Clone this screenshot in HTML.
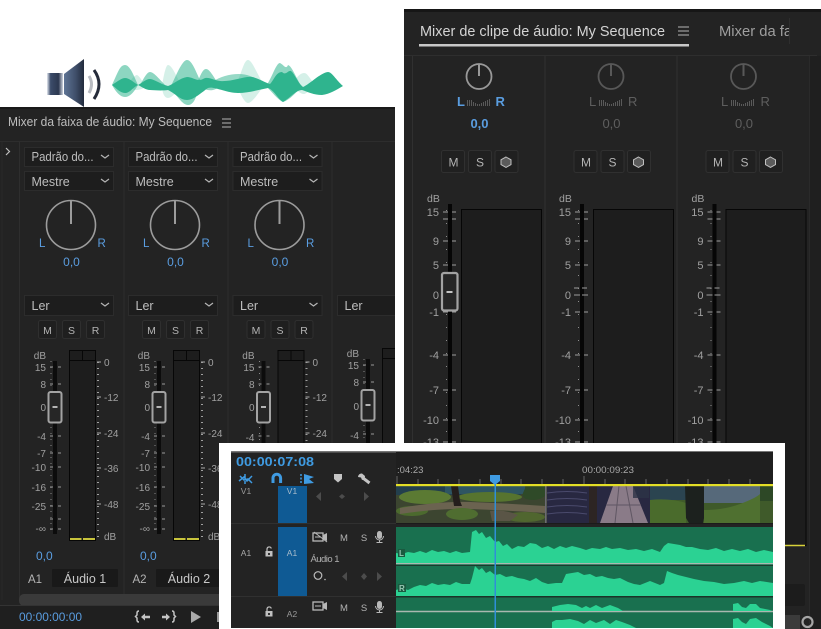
<!DOCTYPE html>
<html><head><meta charset="utf-8"><style>
html,body{margin:0;padding:0;background:#fff;width:821px;height:629px;overflow:hidden}
svg{display:block}
text{font-family:"Liberation Sans",sans-serif;fill:#b4b4b4}
.b{fill:#5a9de0}
.s{font-size:10px;fill:#a0a0a0}
.d{font-size:12.5px;fill:#bdbdbd}
.r{text-anchor:end}
.m{text-anchor:middle}
.g{fill:#5e5e5e}
</style></head><body>
<svg width="821" height="629" viewBox="0 0 821 629" xmlns="http://www.w3.org/2000/svg">
<defs>
<linearGradient id="cone" x1="0" x2="1" y1="0" y2="0"><stop offset="0" stop-color="#5f7596"/><stop offset=".6" stop-color="#3e4d68"/><stop offset="1" stop-color="#222b3c"/></linearGradient>
<linearGradient id="bx" x1="0" x2="1" y1="0" y2="0"><stop offset="0" stop-color="#e4e8f0"/><stop offset=".22" stop-color="#3c4c6a"/><stop offset=".72" stop-color="#2c3850"/><stop offset="1" stop-color="#cfd5e0"/></linearGradient>
<clipPath id="lp"><rect x="0" y="107" width="395" height="522"/></clipPath>
<clipPath id="rp"><rect x="404" y="9" width="417" height="620"/></clipPath>
<clipPath id="tl"><rect x="396" y="452" width="377" height="176"/></clipPath>
<path id="chev" d="M0 0l4 3 4-3" fill="none" stroke="#b5b5b5" stroke-width="1.2"/>

<g id="lTop">
<rect x="24.500" y="147.500" width="89" height="19" fill="#1d1d1d" stroke="#2c2c2c"/>
<rect x="24.500" y="171.500" width="89" height="19" fill="#1d1d1d" stroke="#2c2c2c"/>
<use href="#chev" x="101" y="155"/><use href="#chev" x="101" y="179"/>
<circle cx="71" cy="225" r="24.500" fill="none" stroke="#9c9c9c" stroke-width="1.600"/>
<path d="M71 201V224" stroke="#9c9c9c" stroke-width="2"/>
</g>
<g id="lLer">
<rect x="24.500" y="295.500" width="89" height="20" fill="#1d1d1d" stroke="#2c2c2c"/>
<use href="#chev" x="101" y="303"/>
</g>
<g id="lBtn">
<rect x="38.500" y="320.500" width="18" height="18" rx="2" fill="#1f1f1f" stroke="#2f2f2f"/>
<rect x="62.500" y="320.500" width="18" height="18" rx="2" fill="#1f1f1f" stroke="#2f2f2f"/>
<rect x="86.500" y="320.500" width="18" height="18" rx="2" fill="#1f1f1f" stroke="#2f2f2f"/>
</g>
<g id="lFad">
<rect x="53" y="361" width="4" height="173" fill="#0c0c0c"/>
<path d="M50 367h3M58 367h3M50 384h3M58 384h3M50 436h3M58 436h3M50 453h3M58 453h3M50 467h3M58 467h3M50 487h3M58 487h3M50 506h3M58 506h3M50 519h3M58 519h3M50 529h3M58 529h3" stroke="#9a9a9a" stroke-width="1"/>
<path d="M51 361V534" stroke="#8a8a8a" stroke-width="1" stroke-dasharray="1 5"/>
<rect x="48.500" y="392" width="13" height="30.500" rx="2" fill="#262626" stroke="#a3a3a3" stroke-width="2"/>
<path d="M52.500 407h5" stroke="#c4c4c4" stroke-width="1.800"/>
<rect x="69.500" y="350.500" width="26" height="190" fill="#1d1d1d" stroke="#070707"/>
<path d="M69.500 360.500h26M82.500 350.500v10" stroke="#070707"/>
<path d="M70 539h11.500M83 539h12" stroke="#c8c43c" stroke-width="2"/>
<path d="M97 362h4M97 397h4M97 433h4M97 468h4M97 504h4" stroke="#a8a8a8"/>
<path d="M98 362V538" stroke="#a0a0a0" stroke-width="2" stroke-dasharray="1 5"/>
</g>
<g id="rMeter">
<rect x="448" y="204" width="4" height="340" fill="#060606"/>
<path d="M443 212h5M452 212h4M443 219h5M452 219h4M443 241h5M452 241h4M443 265h5M452 265h4M443 295h5M452 295h4M443 312h5M452 312h4M443 355h5M452 355h4M443 390h5M452 390h4M443 420h5M452 420h4M443 442h5M452 442h4" stroke="#9d9d9d"/>
<path d="M446.500 210V444" stroke="#8f8f8f" stroke-dasharray="1 12"/>
<rect x="461.500" y="209.500" width="80" height="336" fill="#1d1d1d" stroke="#060606"/>
</g>
<g id="rBtn">
<rect x="441.500" y="150.500" width="23" height="22" rx="2" fill="#202020" stroke="#303030"/>
<rect x="468.500" y="150.500" width="23" height="22" rx="2" fill="#202020" stroke="#303030"/>
<rect x="495" y="150.500" width="23" height="22" rx="2" fill="#202020" stroke="#303030"/>
<path d="M506 157l5 2.800v4.800l-5 2.800-5-2.800v-4.800z" fill="#5b5b5b" stroke="#c0c0c0" stroke-width="1"/>
</g>
<path id="mini" d="M467.500 106v-6M469.500 106v-6M471.500 106v-6M473.500 106v-4M475.500 106v-3M477.500 106v-2M479.500 106v-2M481.500 106v-3M483.500 106v-4M485.500 106v-5M487.500 106v-6M489.500 106v-7" stroke="#5a5a5a" stroke-width="1"/>
<g id="mic"><rect x="-2.500" y="-6" width="5" height="8" rx="2.500" fill="#b8b8b8"/><path d="M-4 -1a4 4 0 0 0 8 0M0 3v2M-3 5.500h6" fill="none" stroke="#b8b8b8" stroke-width="1"/></g>
<g id="lock"><rect x="-3.500" y="-1" width="7" height="5.500" fill="#c0c0c0"/><path d="M-2 -1v-2a2.200 2.200 0 0 1 4.300 -.5" fill="none" stroke="#c0c0c0" stroke-width="1.200"/><rect x="-1" y="1" width="2" height="2" fill="#333"/></g>
<g id="cam"><rect x="-7" y="-4" width="10" height="8" fill="none" stroke="#b8b8b8" stroke-width="1.300"/><path d="M3 -2l4-2v8l-4-2z" fill="#b8b8b8"/><path d="M-5 0h6" stroke="#b8b8b8"/></g>
</defs>

<!-- speaker -->
<rect x="47" y="73" width="16" height="22" fill="url(#bx)"/>
<path d="M64 74L84 59V107L64 94z" fill="url(#cone)"/>
<path d="M89 76q5 8 0 17" fill="none" stroke="#b9bcc2" stroke-width="3"/>
<path d="M94 70q10 14 0 29" fill="none" stroke="#252b3a" stroke-width="3"/>

<!-- wave -->
<g fill="#2fb48e">
<path opacity=".2" d="M162 85C164 74 166 65 168 65C172 65 176 76 182 86C176 92 172 98 168 98C164 98 162 92 162 85Z"/>
<path opacity=".2" d="M236 85C242 72 244 60 248 60C252 60 256 72 264 85C258 94 252 103 248 103C244 103 240 92 236 85Z"/>
<path opacity=".2" d="M292 84C296 78 300 73 304 73C308 73 310 80 316 85C310 90 306 94 304 94C300 94 296 90 292 84Z"/>
<path opacity=".2" d="M128 84C132 78 135 75 137 75C140 76 142 82 146 86C142 90 138 90 134 90Z"/>
<path opacity=".55" d="M112 85C118 72 120 65 125 65C130 65 134 76 138 85C134 92 130 97 125 97C120 97 116 92 112 85Z"/>
<path opacity=".55" d="M140 85C144 78 147 72 150 72C154 72 160 80 166 86C160 90 150 91 140 85Z"/>
<path opacity=".55" d="M170 88C176 76 182 60 187 60C192 60 196 72 200 80C198 90 196 105 188 105C182 105 176 94 170 88Z"/>
<path opacity=".55" d="M196 84C200 78 202 69 206 69C210 69 214 78 220 86C214 92 206 92 196 84Z"/>
<path opacity=".5" d="M212 82C224 74 240 72 250 76C256 78 262 82 268 86C258 90 240 90 228 90C222 90 216 86 212 82Z"/>
<path opacity=".55" d="M266 86C272 78 276 63 280 63C284 65 286 70 288 65C292 66 296 78 302 87C296 92 290 100 283 102C278 100 272 92 266 86Z"/>
<path d="M112 85C118 81 122 78 125 78C129 78 133 82 138 85C142 83 146 79 150 79C154 79 160 84 168 86C174 84 180 78 187 77C193 77 197 82 203 79C208 76 212 80 220 81C232 82 244 76 252 77C258 78 264 82 270 84C274 80 276 72 282 72C286 76 288 70 291 71C295 74 297 82 303 87C310 84 320 73 328 72C332 72 336 80 343 86C336 90 330 94 322 95C314 95 308 92 302 90C296 90 290 98 283 102C278 99 274 90 268 88C258 90 248 93 238 93C226 93 214 86 208 88C202 92 194 100 187 100C180 100 176 94 168 90C160 91 154 90 150 90C146 90 142 87 138 85C132 88 130 93 125 93C120 93 116 88 112 85Z"/>
</g>

<!-- LEFT PANEL -->
<g clip-path="url(#lp)">
<rect x="0" y="107" width="395" height="522" fill="#232323"/>
<rect x="0" y="107" width="395" height="2" fill="#1a1a1a"/>
<path d="M0 141.500H395" stroke="#2d2d2d"/>
<path d="M19.500 142V600M124 142V600M228 142V600M332 142V600" stroke="#2e2e2e"/>
<path d="M2 142V600" stroke="#2a2a2a"/>
<path d="M6 148l3.500 3.500-3.500 3.500" fill="none" stroke="#c0c0c0" stroke-width="1.200"/>
<path d="M222 119h9M222 123h9M222 127h9" stroke="#b5b5b5"/>
<use href="#lTop"/><use href="#lLer"/><use href="#lBtn"/><use href="#lFad"/>
<use href="#lTop" x="104"/><use href="#lLer" x="104"/><use href="#lBtn" x="104"/><use href="#lFad" x="104"/>
<use href="#lTop" x="208.500"/><use href="#lLer" x="208.500"/><use href="#lBtn" x="208.500"/><use href="#lFad" x="208.500"/>
<rect x="337.500" y="295.500" width="70" height="20" fill="#1d1d1d" stroke="#2c2c2c"/>
<use href="#lFad" x="313" y="-2"/>
<rect x="52" y="569" width="66" height="18" rx="1" fill="#191919"/>
<rect x="156" y="569" width="66" height="18" rx="1" fill="#191919"/>
<rect x="19" y="594" width="376" height="12" rx="5" fill="#3a3a3a"/>
<rect x="0" y="605" width="395" height="24" fill="#1f1f1f"/>
<path d="M0 605.500H395" stroke="#333"/>

<text x="8" y="126" font-size="12.500" textLength="204" lengthAdjust="spacingAndGlyphs" style="fill:#bdbdbd">Mixer da faixa de áudio: My Sequence</text>

<text class="d" x="31.500" y="161" textLength="62" lengthAdjust="spacingAndGlyphs">Padrão do...</text>
<text class="d" x="31.500" y="186">Mestre</text>
<text class="d" x="135.500" y="161" textLength="62" lengthAdjust="spacingAndGlyphs">Padrão do...</text>
<text class="d" x="135.500" y="186">Mestre</text>
<text class="d" x="240" y="161" textLength="62" lengthAdjust="spacingAndGlyphs">Padrão do...</text>
<text class="d" x="240" y="186">Mestre</text>

<text class="b" x="39" y="247" font-size="11.500">L</text><text class="b" x="97.500" y="247" font-size="11.500">R</text>
<text class="b m" x="71.500" y="266" font-size="12">0,0</text>
<text class="b" x="143" y="247" font-size="11.500">L</text><text class="b" x="201.500" y="247" font-size="11.500">R</text>
<text class="b m" x="175.500" y="266" font-size="12">0,0</text>
<text class="b" x="247.500" y="247" font-size="11.500">L</text><text class="b" x="306" y="247" font-size="11.500">R</text>
<text class="b m" x="280" y="266" font-size="12">0,0</text>

<text class="d" x="31.500" y="310">Ler</text><text class="d" x="135.500" y="310">Ler</text><text class="d" x="240" y="310">Ler</text><text class="d" x="344.500" y="310">Ler</text>

<text class="m" x="47.500" y="334" font-size="10.500">M</text><text class="m" x="71.500" y="334" font-size="10.500">S</text><text class="m" x="95.500" y="334" font-size="10.500">R</text>
<text class="m" x="151.500" y="334" font-size="10.500">M</text><text class="m" x="175.500" y="334" font-size="10.500">S</text><text class="m" x="199.500" y="334" font-size="10.500">R</text>
<text class="m" x="256" y="334" font-size="10.500">M</text><text class="m" x="280" y="334" font-size="10.500">S</text><text class="m" x="304" y="334" font-size="10.500">R</text>

<text class="s r" x="46" y="359">dB</text><text class="s r" x="46" y="371">15</text><text class="s r" x="46" y="388">8</text><text class="s r" x="46" y="411">0</text><text class="s r" x="46" y="440">-4</text><text class="s r" x="46" y="457">-7</text><text class="s r" x="46" y="471">-10</text><text class="s r" x="46" y="491">-16</text><text class="s r" x="46" y="510">-25</text><text class="s r" x="46" y="532">-∞</text>
<text class="s" x="104" y="366">0</text><text class="s" x="104" y="401">-12</text><text class="s" x="104" y="437">-24</text><text class="s" x="104" y="472">-36</text><text class="s" x="104" y="508">-48</text><text class="s" x="104" y="540">dB</text>

<text class="s r" x="150" y="359">dB</text><text class="s r" x="150" y="371">15</text><text class="s r" x="150" y="388">8</text><text class="s r" x="150" y="411">0</text><text class="s r" x="150" y="440">-4</text><text class="s r" x="150" y="457">-7</text><text class="s r" x="150" y="471">-10</text><text class="s r" x="150" y="491">-16</text><text class="s r" x="150" y="510">-25</text><text class="s r" x="150" y="532">-∞</text>
<text class="s" x="208" y="366">0</text><text class="s" x="208" y="401">-12</text><text class="s" x="208" y="437">-24</text><text class="s" x="208" y="472">-36</text><text class="s" x="208" y="508">-48</text><text class="s" x="208" y="540">dB</text>

<text class="s r" x="254.500" y="359">dB</text><text class="s r" x="254.500" y="371">15</text><text class="s r" x="254.500" y="388">8</text><text class="s r" x="254.500" y="411">0</text><text class="s r" x="254.500" y="441">-4</text>
<text class="s" x="312.500" y="366">0</text><text class="s" x="312.500" y="401">-12</text><text class="s" x="312.500" y="437">-24</text>

<text class="s r" x="359" y="357">dB</text><text class="s r" x="359" y="369">15</text><text class="s r" x="359" y="386">8</text><text class="s r" x="359" y="410">0</text><text class="s r" x="359" y="439">-4</text>

<text class="b" x="36" y="560" font-size="12">0,0</text>
<text class="b" x="140" y="560" font-size="12">0,0</text>
<text x="28" y="583" font-size="11.500">A1</text>
<text class="m" x="85" y="583" font-size="12.500" style="fill:#c8c8c8">Áudio 1</text>
<text x="132.500" y="583" font-size="11.500">A2</text>
<text class="m" x="189" y="583" font-size="12.500" style="fill:#c8c8c8">Áudio 2</text>
<text class="b" x="19" y="621" font-size="11.500" textLength="63" lengthAdjust="spacingAndGlyphs">00:00:00:00</text>

<path d="M139 611q-2 0-2 2v2l-1.500 1.500 1.500 1.500v2q0 2 2 2" fill="none" stroke="#c4c4c4" stroke-width="1.500"/>
<path d="M141 617l4-3.500v2.200h5v2.600h-5v2.200z" fill="#c4c4c4"/>
<path d="M172 611q2 0 2 2v2l1.500 1.500-1.500 1.500v2q0 2-2 2" fill="none" stroke="#c4c4c4" stroke-width="1.500"/>
<path d="M170 617l-4-3.500v2.200h-4v2.600h4v2.200z" fill="#c4c4c4"/>
<path d="M191 611l10 6-10 6z" fill="#a8a8a8"/>
<path d="M218 612v10" stroke="#c4c4c4" stroke-width="1.500"/>
</g>

<!-- RIGHT PANEL -->
<g clip-path="url(#rp)">
<rect x="404" y="9" width="417" height="620" fill="#232323"/>
<rect x="404" y="9" width="417" height="3" fill="#161616"/>
<path d="M404 55.500H817" stroke="#2e2e2e"/>
<path d="M412.500 56V629M545 56V629M677 56V629M810 56V629" stroke="#303030"/>
<rect x="810" y="56" width="11" height="573" fill="#1f1f1f"/>
<rect x="419" y="44" width="270" height="2.500" fill="#c8c8c8"/>
<text x="420" y="36" font-size="14.500" textLength="245" lengthAdjust="spacingAndGlyphs" style="fill:#d4d4d4">Mixer de clipe de áudio: My Sequence</text>
<path d="M678 27h11M678 31h11M678 35h11" stroke="#b5b5b5" stroke-width="1"/>
<text x="719" y="36" font-size="14.500" textLength="92" lengthAdjust="spacingAndGlyphs" style="fill:#9f9f9f">Mixer da faixa</text>
<rect x="789" y="18" width="32" height="30" fill="#232323"/>
<path d="M789.500 18V44" stroke="#2e2e2e"/>

<circle cx="479" cy="76.500" r="12.500" fill="none" stroke="#999" stroke-width="1.800"/><path d="M479 64V76" stroke="#999" stroke-width="2"/>
<circle cx="611" cy="76.500" r="12.500" fill="none" stroke="#585858" stroke-width="1.800"/><path d="M611 64V76" stroke="#585858" stroke-width="2"/>
<circle cx="743.500" cy="76.500" r="12.500" fill="none" stroke="#585858" stroke-width="1.800"/><path d="M743.500 64V76" stroke="#585858" stroke-width="2"/>
<use href="#mini"/><use href="#mini" x="132"/><use href="#mini" x="264"/>

<text class="b" x="457" y="106" font-size="13" font-weight="bold">L</text><text class="b" x="495.500" y="106" font-size="13" font-weight="bold">R</text>
<text class="b m" x="479.500" y="128" font-size="13" font-weight="bold">0,0</text>
<text class="g" x="589" y="106" font-size="13">L</text><text class="g" x="628" y="106" font-size="13">R</text>
<text class="g m" x="611.500" y="128" font-size="13">0,0</text>
<text class="g" x="721" y="106" font-size="13">L</text><text class="g" x="760.500" y="106" font-size="13">R</text>
<text class="g m" x="744" y="128" font-size="13">0,0</text>

<use href="#rBtn"/><use href="#rBtn" x="132.500"/><use href="#rBtn" x="264.500"/>
<text class="m" x="453.500" y="166.500" font-size="12">M</text><text class="m" x="480" y="166.500" font-size="12">S</text>
<text class="m" x="586" y="166.500" font-size="12">M</text><text class="m" x="612.500" y="166.500" font-size="12">S</text>
<text class="m" x="718" y="166.500" font-size="12">M</text><text class="m" x="744.500" y="166.500" font-size="12">S</text>

<use href="#rMeter"/><use href="#rMeter" x="132"/><use href="#rMeter" x="264.500"/>
<rect x="442" y="273" width="15.500" height="37.500" rx="2" fill="#262626" stroke="#a3a3a3" stroke-width="2.200"/>
<path d="M446.500 292h6" stroke="#c4c4c4" stroke-width="2"/>
<path d="M574 288h14M574 295h14" stroke="#9d9d9d" stroke-dasharray="5 3"/>
<path d="M706.500 288h14M706.500 295h14" stroke="#9d9d9d" stroke-dasharray="5 3"/>
<path d="M727 545.500H805" stroke="#d8d23a" stroke-width="1.500"/>

<text class="s" x="427" y="202" style="font-size:10.500px">dB</text>
<text class="s r" x="439" y="216" style="font-size:11px">15</text><text class="s r" x="439" y="245" style="font-size:11px">9</text><text class="s r" x="439" y="269" style="font-size:11px">5</text><text class="s r" x="439" y="299" style="font-size:11px">0</text><text class="s r" x="439" y="316" style="font-size:11px">-1</text><text class="s r" x="439" y="359" style="font-size:11px">-4</text><text class="s r" x="439" y="394" style="font-size:11px">-7</text><text class="s r" x="439" y="424" style="font-size:11px">-10</text><text class="s r" x="439" y="446" style="font-size:11px">-13</text>
<text class="s" x="559" y="202" style="font-size:10.500px">dB</text>
<text class="s r" x="571" y="216" style="font-size:11px">15</text><text class="s r" x="571" y="245" style="font-size:11px">9</text><text class="s r" x="571" y="269" style="font-size:11px">5</text><text class="s r" x="571" y="299" style="font-size:11px">0</text><text class="s r" x="571" y="316" style="font-size:11px">-1</text><text class="s r" x="571" y="359" style="font-size:11px">-4</text><text class="s r" x="571" y="394" style="font-size:11px">-7</text><text class="s r" x="571" y="424" style="font-size:11px">-10</text><text class="s r" x="571" y="446" style="font-size:11px">-13</text>
<text class="s" x="691.500" y="202" style="font-size:10.500px">dB</text>
<text class="s r" x="703.500" y="216" style="font-size:11px">15</text><text class="s r" x="703.500" y="245" style="font-size:11px">9</text><text class="s r" x="703.500" y="269" style="font-size:11px">5</text><text class="s r" x="703.500" y="299" style="font-size:11px">0</text><text class="s r" x="703.500" y="316" style="font-size:11px">-1</text><text class="s r" x="703.500" y="359" style="font-size:11px">-4</text><text class="s r" x="703.500" y="394" style="font-size:11px">-7</text><text class="s r" x="703.500" y="424" style="font-size:11px">-10</text><text class="s r" x="703.500" y="446" style="font-size:11px">-13</text>
<rect x="770" y="584" width="35" height="22" rx="2" fill="#1c1c1c"/>
<rect x="770" y="615" width="30" height="14" fill="#3b3b3b"/>
<circle cx="807.500" cy="622" r="5" fill="none" stroke="#a6a6a6" stroke-width="2.200"/>
</g>

<!-- WHITE BOX + TIMELINE -->
<rect x="219" y="443" width="566" height="186" fill="#fff"/>
<rect x="231" y="451" width="542" height="177" fill="#232323"/>
<rect x="231" y="451" width="542" height="1.500" fill="#777"/>
<rect x="396" y="452" width="377" height="33" fill="#1f1f1f"/>
<text x="236" y="466" font-size="13" font-weight="bold" textLength="78" lengthAdjust="spacingAndGlyphs" class="b" style="fill:#3f9be2">00:00:07:08</text>
<text x="397" y="473" font-size="9.500" style="fill:#a8a8a8">:04:23</text>
<text x="582" y="473" font-size="9.500" textLength="52" lengthAdjust="spacingAndGlyphs" style="fill:#a8a8a8">00:00:09:23</text>

<g stroke="#3f9be2" fill="none" stroke-width="1.500">
<path d="M239 481l5-4 3 4 5-5M240 476l4 4 4-1 4 4M245 474v4M245 481v3"/>
<path d="M273 483v-5a3.800 3.800 0 0 1 7.600 0v5" stroke-width="3"/>
<path d="M301 474v10" stroke-dasharray="2 1.500"/>
</g>
<path d="M304 474l10 3-5 2 5 4-10 1z" fill="#3f9be2"/>
<path d="M334 474h8v5l-4 3.500-4-3.500z" fill="#c4c4c4"/>
<path d="M363 478l6.500 5" stroke="#c4c4c4" stroke-width="3"/>
<path d="M362 473.500a3.500 3.500 0 0 0-4 3.500l3 .5 1 2.500a4 4 0 0 0 3-4z" fill="#c4c4c4"/>

<rect x="278" y="486" width="29" height="37" fill="#0f5a94"/>
<rect x="278" y="527" width="29" height="69" fill="#0f5a94"/>
<path d="M231 523.500H396M231 596.500H396" stroke="#303030"/>
<text class="m" x="246" y="494" font-size="8.500" style="fill:#999">V1</text>
<text class="m" x="292" y="494" font-size="8.500" style="fill:#a9bccb">V1</text>
<path d="M322 492v9l-5-4.500zM343 494l3 2.500-3 2.500-3-2.500zM365 492v9l5-4.500z" fill="#4c4c4c" transform="translate(-1,0)"/>
<text class="m" x="246" y="556" font-size="8.500" style="fill:#aaa">A1</text>
<use href="#lock" x="269" y="552"/>
<text class="m" x="292" y="556" font-size="8.500" style="fill:#a9bccb">A1</text>
<use href="#cam" x="320" y="537"/>
<path d="M314 532l13 10" stroke="#b8b8b8" stroke-width="1"/>
<text class="m" x="344" y="541" font-size="9.500">M</text>
<text class="m" x="364" y="541" font-size="9.500">S</text>
<use href="#mic" x="379.500" y="537"/>
<text x="310.500" y="562" font-size="9.500" textLength="29" style="fill:#b0b0b0">Áudio 1</text>
<circle cx="318" cy="575.500" r="3.800" fill="none" stroke="#bbb" stroke-width="1.200"/>
<circle cx="325" cy="579.500" r=".8" fill="#bbb"/>
<path d="M347 572v9l-5-4.500zM364 573l3 3.500-3 3.500-3-3.500zM377 572v9l5-4.500z" fill="#4c4c4c"/>
<use href="#lock" x="269" y="612"/>
<text class="m" x="292" y="617" font-size="8.500" style="fill:#999">A2</text>
<use href="#cam" x="320" y="606"/>
<text class="m" x="344" y="611" font-size="9.500">M</text>
<text class="m" x="364" y="611" font-size="9.500">S</text>
<use href="#mic" x="379.500" y="607"/>

<g clip-path="url(#tl)">
<path d="M397 476v8M418 479v5M438 479v5M459 479v5M480 479v5M501 479v5M521 479v5M542 479v5M563 479v5M584 476v8M605 479v5M625 479v5M646 479v5M667 479v5M688 479v5M708 479v5M729 479v5M750 479v5" stroke="#666"/>
<rect x="396" y="486" width="377" height="38" fill="#1b1b1b"/>
<!-- thumb 1 -->
<rect x="396" y="486" width="151" height="37" fill="#3c4530"/>
<rect x="396" y="486" width="125" height="9" fill="#233f4d"/>
<rect x="445" y="486" width="80" height="8" fill="#2e5562"/>
<ellipse cx="425" cy="497" rx="26" ry="7" fill="#5b7a33"/>
<ellipse cx="412" cy="511" rx="16" ry="5" fill="#4c6a2e"/>
<path d="M400 508Q440 501 470 502T545 506V513Q500 510 470 509T400 514Z" fill="#6b6350"/>
<ellipse cx="490" cy="497" rx="32" ry="5" fill="#57742f"/>
<ellipse cx="462" cy="514" rx="16" ry="6" fill="#4f6d30"/>
<ellipse cx="525" cy="517" rx="20" ry="5" fill="#50662f"/>
<path d="M490 511q14-2 28 4l-8 6h-18z" fill="#5a5546"/>
<path d="M526 486h19v10q-8 6-19 3q-5-3-3-6z" fill="#2f4a28"/>
<path d="M451 486h7l2 15 2 5h-8z" fill="#241e1c"/>
<rect x="545" y="486" width="1.500" height="37" fill="#6c6a74"/>
<!-- thumb 2 -->
<rect x="547" y="486" width="103" height="37" fill="#282841"/>
<path d="M547 493q20-3 40 0M547 500q20-3 40 0M547 507q20-3 40 0M547 514q20-3 40 0" stroke="#4a4a6c" fill="none"/>
<rect x="589" y="486" width="8" height="37" fill="#2d2523"/>
<path d="M613 486h20l15 37h-48z" fill="#8a7b88"/>
<path d="M619 486l-4 37M626 486l7 37M606 505h35" stroke="#5f5663"/>
<rect x="633" y="486" width="16" height="12" fill="#2c3346" opacity=".8"/>
<!-- thumb 3 -->
<rect x="650" y="486" width="123" height="37" fill="#3f5a2a"/>
<rect x="650" y="486" width="36" height="14" fill="#2b4450"/>
<rect x="704" y="486" width="56" height="17" fill="#56697a"/>
<path d="M650 500q20-2 36 3v20h-36z" fill="#4a6b2c"/>
<path d="M704 510q20 0 36-6t20-10v29h-56z" fill="#4f7030"/>
<path d="M760 486h13v15h-13z" fill="#2d4826"/>
<path d="M685 486h19v32l-1 5h-14l-3-5z" fill="#1c211e"/>
<rect x="396" y="524" width="377" height="3" fill="#232323"/>
<rect x="396" y="527" width="377" height="101" fill="#19704f"/>
<path d="M396 563.500H773" stroke="#a9b8b0" stroke-width="1.400"/>
<path d="M396 565.500H773" stroke="#1a3a2d" stroke-width="1"/>
<rect x="396" y="596" width="377" height="1.500" fill="#1b3328"/>
<path d="M396 611.500H773" stroke="#a9b8b0" stroke-width="1.400"/>
<path fill="#2bd293" d="M396 563V553L402 554 408 552 414 553 420 551 426 553 432 550 438 552 444 551 450 553 456 551 462 553 470 552 472 532 476 530 479 534 482 532 486 538 490 536 495 542 499 541 503 546 507 544 512 549 518 546 524 547 530 543 536 544 542 548 548 546 554 549 560 546 566 548 572 546 580 548 586 550 592 548 600 549 606 547 612 549 620 548 628 550 636 549 644 551 652 549 660 552 664 546 668 543 674 544 680 545 686 547 692 547 700 549 708 550 716 548 724 551 732 549 740 551 748 549 756 552 764 550 773 552V563Z"/>
<path fill="#2bd293" d="M396 596V590L402 588 408 590 414 587 420 585 426 586 432 583 438 585 444 584 450 585 456 582 462 584 470 584 472 578 475 566 479 570 482 568 486 573 490 571 495 575 500 574 506 577 512 576 518 578 524 579 530 581 536 578 542 582 548 584 556 583 562 583 566 574 572 573 578 572 584 575 590 574 596 577 602 576 608 578 614 579 620 578 628 582 634 584 640 585 650 581 660 585 664 583 667 571 672 573 678 575 686 577 694 579 704 581 714 582 724 584 734 583 744 581 752 583 760 581 773 583V596Z"/>
<path fill="#2bd293" d="M552 611V607L560 605 568 604 576 605 582 608 586 606 590 608 596 605 602 608 610 605 618 608 623 611ZM733 611V604L738 603 742 607 746 608 750 604 756 604 760 608 770 610 772 611Z"/>
<path fill="#2bd293" d="M552 628V622L556 620 562 620 570 619 578 621 584 624 590 620 596 623 604 620 610 624 616 620 622 622 630 625 636 628ZM733 628V619L738 618 742 622 746 624 750 619 756 618 762 622 770 626 773 628Z"/>
<rect x="398" y="549" width="7" height="8" fill="#1a5a40"/>
<text x="399" y="556" font-size="8" font-weight="bold" style="fill:#97c7b2">L</text>
<rect x="398" y="584" width="8" height="8" fill="#1a5a40"/>
<text x="399" y="591" font-size="8" font-weight="bold" style="fill:#97c7b2">R</text>
<rect x="396" y="484" width="377" height="2.200" fill="#e3de26"/>
<rect x="494.500" y="480" width="1.500" height="148" fill="#2f8fd8"/>
<path d="M490 475h10v6l-5 4-5-4z" fill="#3f9be2"/>
</g>
</svg>
</body></html>
